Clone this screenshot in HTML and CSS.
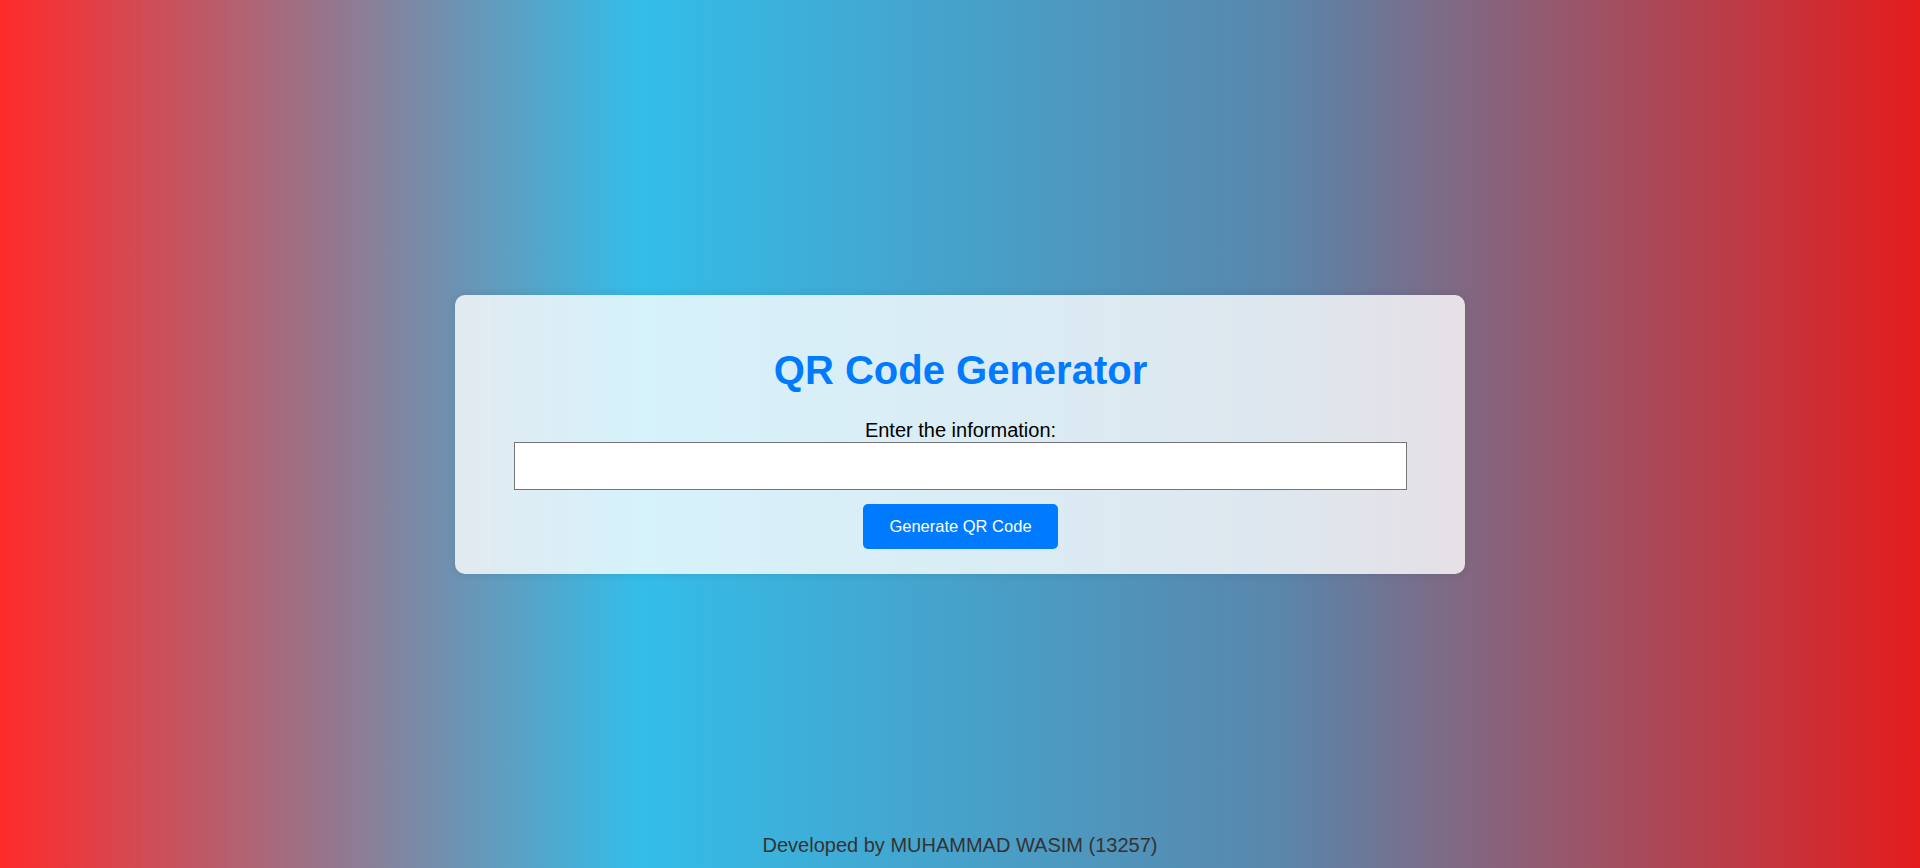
FILE: index.html
```html
<!DOCTYPE html>
<html lang="en">
<head>
<meta charset="utf-8">
<title>QR Code Generator</title>
<link rel="stylesheet" href="styles.css">
</head>
<body>
<div class="card">
  <h1 class="title">QR Code Generator</h1>
  <label class="label" for="info">Enter the information:</label>
  <input class="input" type="text" id="info">
  <button class="btn" type="button">Generate QR Code</button>
</div>
<footer class="footer">Developed by MUHAMMAD WASIM (13257)</footer>
</body>
</html>
```
FILE: styles.css
```css
html, body {
  margin: 0;
  padding: 0;
}
body {
  min-height: 100vh;
  display: grid;
  grid-template-rows: 1fr auto 1fr;
  justify-items: center;
  font-family: "Liberation Sans", Arial, sans-serif;
  background: linear-gradient(to right, #ff2a2a 0%, #33bde9 33.3%, #5a86ab 66.7%, #e41c1c 100%);
}
.card {
  grid-row: 2;
  box-sizing: border-box;
  width: 1010px;
  padding: 25px 58px 25px 59px;
  background: rgba(255, 255, 255, 0.8);
  border-radius: 10px;
  box-shadow: 0 0 10px rgba(0, 0, 0, 0.1);
  display: flex;
  flex-direction: column;
  align-items: center;
}
.title {
  margin: 27px 0 26px;
  font-size: 40px;
  font-weight: bold;
  line-height: 46px;
  color: #007bff;
}
.label {
  font-size: 20px;
  line-height: 23px;
  color: #000;
}
.input {
  box-sizing: border-box;
  width: 100%;
  height: 48px;
  margin: 0;
  border: 1px solid #767676;
  background: #fff;
  font-size: 16px;
  padding: 0 8px;
}
.btn {
  margin-top: 14px;
  height: 45px;
  padding: 0 26px;
  border: none;
  border-radius: 5px;
  background: #007bff;
  color: #fff;
  font-family: "Liberation Sans", Arial, sans-serif;
  font-size: 16.5px;
  cursor: pointer;
}
.footer {
  grid-row: 3;
  align-self: end;
  padding-bottom: 11px;
  font-size: 20px;
  line-height: 23px;
  color: #333;
}
```
